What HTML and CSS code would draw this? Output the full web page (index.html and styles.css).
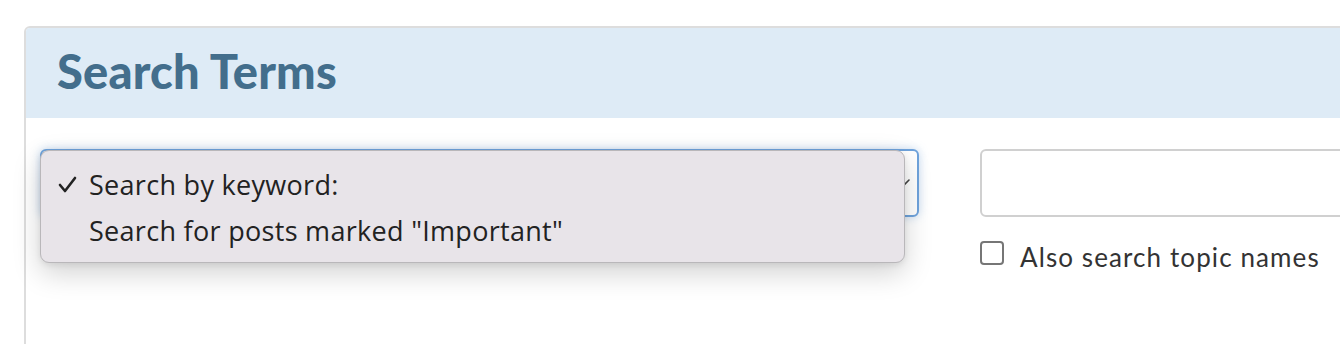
FILE: index.html
```html
<!DOCTYPE html>
<html>
<head>
<meta charset="utf-8">
<link rel="stylesheet" href="styles.css">
</head>
<body>
<div class="panel">
  <div class="panel-head">
    <h2 class="title">Search Terms</h2>
  </div>
  <div class="panel-body">
    <div class="select-wrap">
      <div class="select">
        <svg class="chevron" width="14" height="10" viewBox="0 0 14 10"><path d="M2 2 L7 7 L12 2" fill="none" stroke="#444" stroke-width="1.6" stroke-linecap="round"/></svg>
      </div>
      <div class="menu">
        <div class="menu-item"><span class="check"><svg width="19" height="17" viewBox="0 0 19 17"><path d="M2 9 L7 15 L17 2" fill="none" stroke="#222" stroke-width="2.6" stroke-linecap="round" stroke-linejoin="round"/></svg></span><span>Search by keyword:</span></div>
        <div class="menu-item"><span class="check"></span><span>Search for posts marked "Important"</span></div>
      </div>
    </div>
    <div class="right-col">
      <div class="text-input"></div>
      <label class="check-row"><span class="box"></span><span class="label">Also search topic names</span></label>
    </div>
  </div>
</div>
</body>
</html>
```

FILE: styles.css
```css
html, body {
  margin: 0;
  padding: 0;
  background: #ffffff;
  overflow: hidden;
}
body {
  width: 1340px;
  height: 344px;
  padding: 26px 0 0 24px;
  box-sizing: border-box;
}
.panel {
  width: 1400px;
  height: 400px;
  border: 2px solid #dddddd;
  border-radius: 6px;
  box-sizing: border-box;
}
.panel-head {
  background: #deebf6;
  height: 90px;
  padding-left: 31px;
  display: flex;
  align-items: center;
  border-radius: 4px 4px 0 0;
}
.title {
  margin: 0;
  font-family: Lato, "Liberation Sans", sans-serif;
  font-weight: 900;
  font-size: 47px;
  color: #436e8c;
  letter-spacing: 0.2px;
  position: relative;
  top: -2px;
}
.panel-body {
  display: flex;
  padding: 31px 0 0 14px;
  gap: 61px;
}
.select-wrap {
  position: relative;
  width: 879px;
  flex: none;
}
.select {
  height: 68px;
  box-sizing: border-box;
  border: 2px solid #6fa3dc;
  border-radius: 6px;
  background: #ffffff;
  box-shadow: 0 0 10px rgba(111, 163, 220, 0.4);
  position: relative;
}
.chevron {
  position: absolute;
  right: 6px;
  top: 27px;
}
.menu {
  position: absolute;
  left: 0;
  top: 1px;
  width: 865px;
  height: 113px;
  box-sizing: border-box;
  background: #e8e4e9;
  border: 1px solid #b9b7ba;
  border-radius: 9px;
  box-shadow: 0 10px 28px rgba(0, 0, 0, 0.18), 0 2px 6px rgba(0, 0, 0, 0.08);
  padding-top: 10px;
  font-family: "Open Sans", "Noto Sans", sans-serif;
  font-size: 27px;
  letter-spacing: 0.3px;
  color: #222222;
}
.menu-item {
  display: flex;
  align-items: center;
  height: 46px;
  padding-left: 17px;
}
.check {
  width: 31px;
  flex: none;
  display: flex;
  align-items: center;
}
.right-col {
  flex: 1;
  display: flex;
  flex-direction: column;
}
.text-input {
  height: 68px;
  box-sizing: border-box;
  border: 2px solid #d0d0d0;
  border-radius: 6px;
  background: #fff;
}
.check-row {
  display: flex;
  align-items: flex-start;
  margin-top: 24px;
  font-family: Lato, "Liberation Sans", sans-serif;
  font-size: 26px;
  line-height: 31px;
  letter-spacing: 1.1px;
  color: #333333;
}
.box {
  width: 24px;
  height: 24px;
  box-sizing: border-box;
  border: 2px solid #767676;
  border-radius: 4px;
  margin-left: 0;
  margin-right: 16px;
  background: #fff;
  flex: none;
}
.label {
  margin-top: 1px;
}
```
